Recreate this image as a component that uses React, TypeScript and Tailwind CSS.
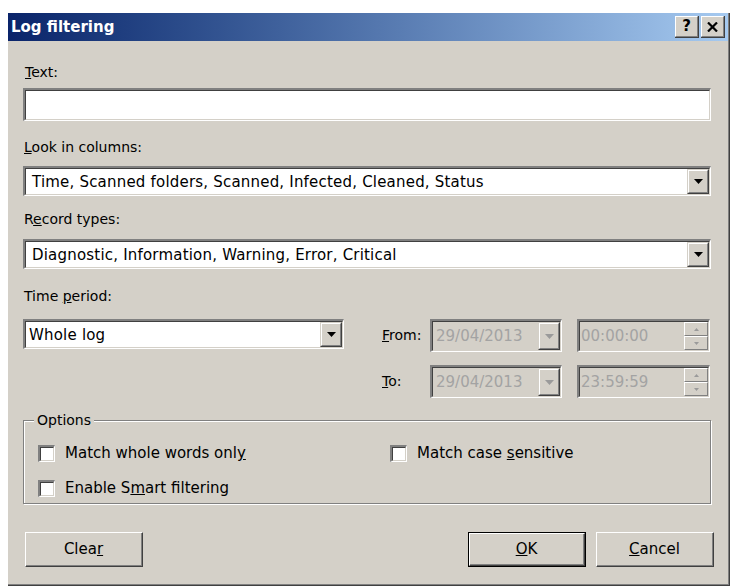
import React from 'react';

const font = { fontFamily: '"DejaVu Sans", Tahoma, sans-serif' };

function Sunken({ className = '', inner = 'bg-white', children }: { className?: string; inner?: string; children?: React.ReactNode }) {
  return (
    <div className={`border-t-2 border-l-2 border-t-[#808080] border-l-[#808080] border-r border-b border-r-white border-b-white ${className}`}>
      <div className={`h-full w-full border-t border-l border-t-[#404040] border-l-[#404040] border-r border-b border-r-[#d4d0c8] border-b-[#d4d0c8] ${inner}`}>
        {children}
      </div>
    </div>
  );
}

function Arrow({ disabled = false }: { disabled?: boolean }) {
  return (
    <svg width="9" height="5" viewBox="0 0 9 5">
      <path d="M0 0h9L4.5 5z" fill={disabled ? '#9a9a9a' : '#000'} />
    </svg>
  );
}

function DropBtn({ disabled = false }: { disabled?: boolean }) {
  return (
    <div className="h-full w-[22px] border-t border-l border-t-[#d4d0c8] border-l-[#d4d0c8] border-r border-b border-r-[#404040] border-b-[#404040]">
      <div className="flex h-full w-full items-center justify-center border-t border-l border-t-white border-l-white border-r border-b border-r-[#808080] border-b-[#808080] bg-[#d4d0c8]">
        <Arrow disabled={disabled} />
      </div>
    </div>
  );
}

function Combo({ text, className = '', pad = 'pl-[6px]' }: { text: string; className?: string; pad?: string }) {
  return (
    <Sunken className={`h-[30px] ${className}`}>
      <div className="flex h-full items-stretch">
        <div className={`flex-1 ${pad} text-[15px] leading-[26px] tracking-[0.2px] text-black`}>{text}</div>
        <DropBtn />
      </div>
    </Sunken>
  );
}

function DateField({ text }: { text: string }) {
  return (
    <Sunken className="h-[33px] w-[132px]" inner="bg-[#d4d0c8]">
      <div className="flex h-full items-stretch">
        <div className="flex-1 pl-[3px] text-[15px] leading-[29px] text-[#a3a3a3]">{text}</div>
        <DropBtn disabled />
      </div>
    </Sunken>
  );
}

function SpinBtn({ up }: { up: boolean }) {
  return (
    <div className="flex flex-1 items-center justify-center border-t border-l border-t-white border-l-white border-r border-b border-r-[#808080] border-b-[#808080] bg-[#d4d0c8]">
      <svg width="5" height="3" viewBox="0 0 5 3">
        <path d={up ? 'M0 3h5L2.5 0z' : 'M0 0h5L2.5 3z'} fill="#9a9a9a" />
      </svg>
    </div>
  );
}

function TimeField({ text }: { text: string }) {
  return (
    <Sunken className="h-[33px] w-[133px]" inner="bg-[#d4d0c8]">
      <div className="flex h-full items-stretch">
        <div className="flex-1 pl-[1px] text-[15px] leading-[29px] text-[#a3a3a3]">{text}</div>
        <div className="flex w-[24px] flex-col">
          <SpinBtn up />
          <SpinBtn up={false} />
        </div>
      </div>
    </Sunken>
  );
}

function Check({ children, className = '' }: { children: React.ReactNode; className?: string }) {
  return (
    <div className={`flex items-center ${className}`}>
      <Sunken className="h-[17px] w-[17px]" />
      <span className="ml-[10px] text-[15px] leading-[18px]">{children}</span>
    </div>
  );
}

function Button({ children, isDefault = false, className = '' }: { children: React.ReactNode; isDefault?: boolean; className?: string }) {
  return (
    <div className={`h-[35px] w-[118px] ${isDefault ? 'border border-black' : ''} ${className}`}>
      <div className="h-full w-full border-t border-l border-t-white border-l-white border-r border-b border-r-[#404040] border-b-[#404040]">
        <div className="flex h-full w-full items-center justify-center border-r border-b border-r-[#808080] border-b-[#808080] bg-[#d4d0c8] text-[15px] text-black">
          {children}
        </div>
      </div>
    </div>
  );
}

function CaptionBtn({ children }: { children: React.ReactNode }) {
  return (
    <div className="h-[22px] w-[24px] border-r border-b border-r-[#404040] border-b-[#404040]">
      <div className="flex h-full w-full items-center justify-center border-t border-l border-t-white border-l-white border-r border-b border-r-[#808080] border-b-[#808080] bg-[#d4d0c8] text-[15px] font-bold leading-none text-black">
        {children}
      </div>
    </div>
  );
}

export default function App() {
  return (
    <div className="h-[587px] w-[734px] bg-white pl-[8px] pt-[13px] text-[14px] text-black" style={font}>
      <div className="h-[573px] w-[722px] border-r border-b border-r-[#404040] border-b-[#404040] bg-[#d4d0c8]">
        <div className="h-full border-r border-b border-r-[#808080] border-b-[#808080]">
          {/* title bar */}
          <div className="flex h-[28px] items-center bg-gradient-to-r from-[#0a246a] to-[#a6caf0] pl-[3px] pr-[3px]">
            <span className="text-[15px] font-bold text-white">Log filtering</span>
            <div className="ml-auto flex gap-[2px]">
              <CaptionBtn>?</CaptionBtn>
              <CaptionBtn>
                <svg width="11" height="10" viewBox="0 0 11 10">
                  <path d="M1 0.5l9 9M10 0.5l-9 9" stroke="#000" strokeWidth="2.2" />
                </svg>
              </CaptionBtn>
            </div>
          </div>

          <div className="pl-[15px] pr-[10px]">
            <div className="mt-[22px] pl-[2px] leading-[18px]"><u>T</u>ext:</div>
            <Sunken className="mt-[7px] h-[33px] w-[688px]" />

            <div className="mt-[17px] pl-[1px] leading-[18px]"><u>L</u>ook in columns:</div>
            <Combo className="mt-[10px] w-[688px]" text="Time, Scanned folders, Scanned, Infected, Cleaned, Status" />

            <div className="mt-[14px] pl-[1px] leading-[18px]">R<u>e</u>cord types:</div>
            <Combo className="mt-[11px] w-[688px]" text="Diagnostic, Information, Warning, Error, Critical" />

            <div className="mt-[18px] pl-[1px] leading-[18px]">Time <u>p</u>eriod:</div>
            <div className="mt-[14px] flex">
              <Combo className="w-[321px]" pad="pl-[3px]" text="Whole log" />
              <div className="ml-[22px] flex flex-col gap-[13px]">
                <div className="flex items-center">
                  <span className="w-[64px] pl-[16px]"><u>F</u>rom:</span>
                  <DateField text="29/04/2013" />
                  <div className="ml-[15px]"><TimeField text="00:00:00" /></div>
                </div>
                <div className="flex items-center">
                  <span className="w-[64px] pl-[16px]"><u>T</u>o:</span>
                  <DateField text="29/04/2013" />
                  <div className="ml-[15px]"><TimeField text="23:59:59" /></div>
                </div>
              </div>
            </div>

            {/* options group */}
            <div className="relative mt-[22px] h-[84px] w-[688px] border border-[#808080] shadow-[1px_1px_0_#fff,inset_1px_1px_0_#fff]">
              <span className="absolute left-[10px] top-[-10px] bg-[#d4d0c8] px-[3px] leading-[18px]">Options</span>
              <div className="flex pl-[14px] pt-[23px]">
                <div className="flex w-[352px] flex-col gap-[17px]">
                  <Check>Match whole words onl<u>y</u></Check>
                  <Check>Enable S<u>m</u>art filtering</Check>
                </div>
                <Check className="self-start">Match case <u>s</u>ensitive</Check>
              </div>
            </div>

            <div className="mt-[28px] flex pr-[4px]">
              <Button className="ml-[2px]">Clea<u>r</u></Button>
              <Button isDefault className="ml-auto w-[117px]">
                <u>O</u>K
              </Button>
              <Button className="ml-[10px]"><u>C</u>ancel</Button>
            </div>
          </div>
        </div>
      </div>
    </div>
  );
}
